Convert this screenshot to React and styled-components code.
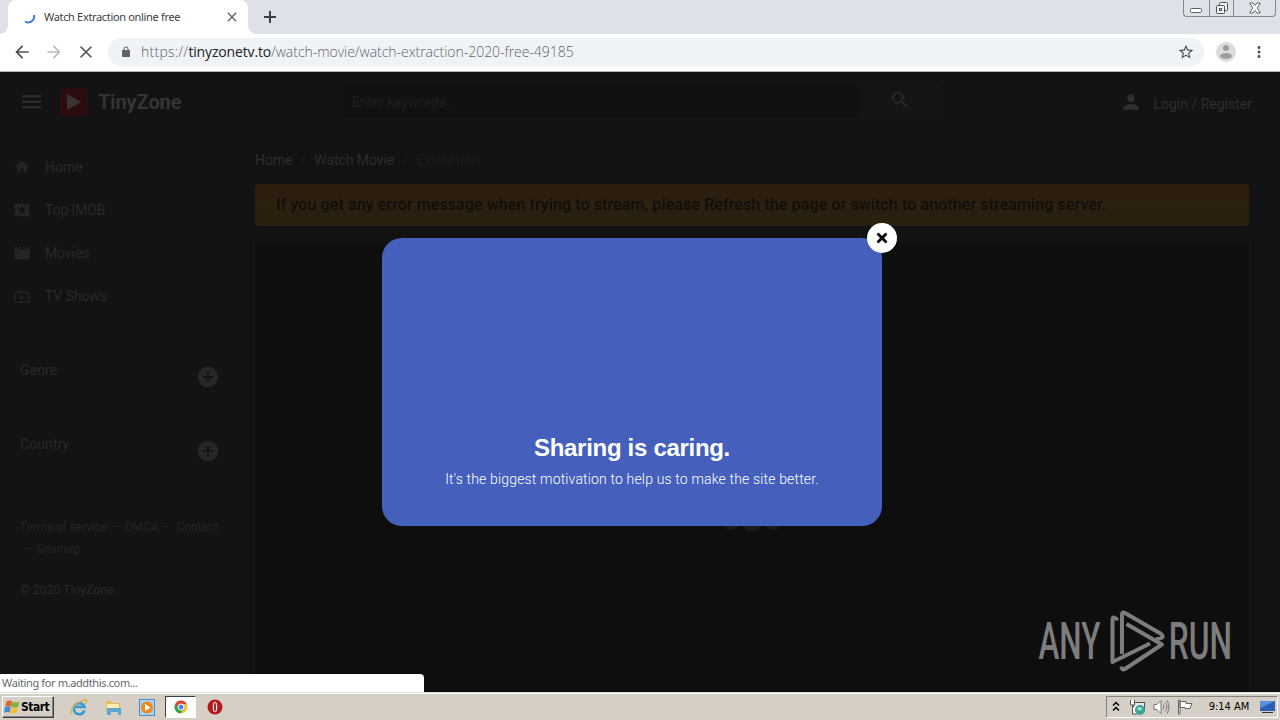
import React from "react";
import styled, { createGlobalStyle } from "styled-components";

const Global = createGlobalStyle`
  * { box-sizing: border-box; }
  body { margin: 0; background: #121212; overflow: hidden; }
  svg { display: block; flex: none; }
`;

const ui = `"DejaVu Sans Condensed", "DejaVu Sans", sans-serif`;

const Screen = styled.div`
  width: 1280px;
  height: 720px;
  display: flex;
  flex-direction: column;
  overflow: hidden;
  font-family: Roboto, sans-serif;
`;

/* ---------- browser chrome ---------- */
const TabStrip = styled.div`
  height: 34px;
  background: #dee1e7;
  display: flex;
  align-items: flex-start;
  padding-left: 8px;
`;
const Tab = styled.div`
  width: 240px;
  height: 34px;
  background: #fff;
  border-radius: 8px 8px 0 0;
  display: flex;
  align-items: center;
  padding: 0 11px 0 15px;
  position: relative;
  &::before, &::after {
    content: "";
    position: absolute;
    bottom: 0;
    width: 8px;
    height: 8px;
  }
  &::before { left: -8px; background: radial-gradient(circle at 0 0, #dee1e7 7.5px, #fff 8px); }
  &::after { right: -8px; background: radial-gradient(circle at 100% 0, #dee1e7 7.5px, #fff 8px); }
`;
const TabTitle = styled.div`
  flex: 1;
  margin-left: 8px;
  white-space: nowrap;
  font: 11px/14px "Noto Sans", sans-serif;
  letter-spacing: -0.33px;
  color: #3c4043;
`;
const NewTab = styled.div`
  margin: 10px 0 0 15px;
`;
const WindowButtons = styled.div`
  margin-left: auto;
  margin-right: 4px;
  width: 93px;
  height: 17px;
  display: flex;
  border: 1px solid #83878e;
  border-top: 0;
  border-radius: 0 0 4px 4px;
`;
const WindowButton = styled.div`
  width: ${(p) => p.$w}px;
  display: flex;
  justify-content: center;
  align-items: center;
  & + & { border-left: 1px solid #83878e; }
`;
const Toolbar = styled.div`
  height: 38px;
  background: #fff;
  border-bottom: 1px solid #b4b4b4;
  display: flex;
  align-items: center;
  padding: 0 12px 1px 14px;
`;
const NavIcons = styled.div`
  display: flex;
  flex: none;
  gap: 16px;
  width: 94px;
`;
const Omnibox = styled.div`
  flex: none;
  width: 1096px;
  height: 28px;
  border-radius: 14px;
  background: #f0f3f6;
  display: flex;
  align-items: center;
  padding: 0 10px 0 12px;
`;
const Url = styled.div`
  flex: 1;
  margin-left: 9px;
  font: 300 14px/18px "Open Sans", sans-serif;
  letter-spacing: -0.04px;
  color: #5f6368;
  white-space: nowrap;
  b { font-weight: 400; color: #202124; letter-spacing: -0.15px; }
`;
const Scheme = styled.span`
  letter-spacing: 0.25px;
`;
const ToolbarEnd = styled.div`
  display: flex;
  align-items: center;
  margin-left: 12px;
  gap: 14px;
`;

/* ---------- site ---------- */
const Site = styled.div`
  flex: 1;
  position: relative;
  display: flex;
  flex-direction: column;
  background: #121212;
  min-height: 0;
`;
const Header = styled.header`
  height: 64px;
  flex: none;
  background: #131313;
  border-bottom: 1px solid #121212;
  display: flex;
  align-items: center;
  padding: 0 28px 4px 20px;
`;
const Brand = styled.div`
  display: flex;
  align-items: center;
  width: 321px;
  font-size: 20px;
  font-weight: 700;
  letter-spacing: -0.1px;
  color: #343434;
`;
const LogoMark = styled.div`
  width: 28px;
  height: 28px;
  margin: 0 10px 0 16px;
  border-radius: 4px;
  background: #2b0d0e;
  display: flex;
  align-items: center;
  justify-content: center;
`;
const Search = styled.div`
  display: flex;
  width: 600px;
  height: 36px;
`;
const SearchInput = styled.div`
  flex: 1;
  background: #111;
  border: 1px solid #141414;
  padding-left: 10px;
  font-size: 14px;
  line-height: 34px;
  letter-spacing: -0.1px;
  color: #1f1f1f;
`;
const SearchButton = styled.div`
  width: 80px;
  background: #151515;
  border-radius: 0 3px 3px 0;
  display: flex;
  justify-content: center;
  padding: 5px 2px 0 0;
`;
const Login = styled.div`
  margin-left: auto;
  display: flex;
  align-items: center;
  gap: 11px;
  font-size: 14px;
  color: #2d2d2d;
  span { padding-top: 4px; }
`;
const Body = styled.div`
  flex: 1;
  display: flex;
  min-height: 0;
`;
const Sidebar = styled.aside`
  width: 240px;
  flex: none;
  background: #131313;
  border-right: 1px solid #111;
  padding-top: 9px;
`;
const NavItem = styled.div`
  height: 43px;
  display: flex;
  align-items: center;
  gap: 15px;
  padding-left: 14px;
  font-size: 14px;
  letter-spacing: -0.1px;
  color: #292929;
`;
const Group = styled.div`
  height: 74px;
  display: flex;
  justify-content: space-between;
  padding: 0 21px 0 20px;
  font-size: 14px;
  line-height: 20px;
  letter-spacing: 0.1px;
  color: #292929;
  svg { margin-top: 7px; }
`;
const Groups = styled.div`
  margin-top: 43px;
`;
const FootLinks = styled.div`
  margin-top: 8px;
  padding: 0 21px 0 20px;
  font-size: 12px;
  line-height: 22px;
  letter-spacing: -0.1px;
  color: #242424;
`;
const FootRow = styled.div`
  display: flex;
  white-space: pre;
  justify-content: ${(p) => (p.$spread ? "space-between" : "flex-start")};
`;
const Copyright = styled.div`
  margin-top: 19px;
  padding-left: 20px;
  font-size: 12.3px;
  line-height: 22px;
  color: #292929;
`;
const Main = styled.main`
  flex: 1;
  display: flex;
  flex-direction: column;
  padding: 14px 31px 0 15px;
`;
const Crumbs = styled.div`
  display: flex;
  font-size: 14px;
  line-height: 20px;
  letter-spacing: -0.08px;
  color: #2c2c2c;
`;
const Slash = styled.span`
  width: 22px;
  text-align: center;
  color: #1d1d1d;
`;
const Current = styled.span`
  color: #1c1c1c;
  letter-spacing: 0.1px;
`;
const Alert = styled.div`
  height: 42px;
  margin-top: 14px;
  border-radius: 3px;
  background: linear-gradient(#2d1f0f 40%, #2a2010 60%);
  padding-left: 21px;
  font-size: 16px;
  font-weight: 500;
  line-height: 41px;
  letter-spacing: 0.105px;
  color: #120e09;
`;
const Player = styled.div`
  flex: 1;
  margin-top: 16px;
  background: #0e0e0e;
  display: flex;
  justify-content: center;
  gap: 5px;
  padding-top: 272px;
`;
const Dot = styled.i`
  width: ${(p) => p.$s}px;
  height: ${(p) => p.$s}px;
  margin-top: ${(p) => (18 - p.$s) / 2}px;
  border-radius: 50%;
  background: #1b1b1b;
`;

/* ---------- things above the page ---------- */
const Modal = styled.div`
  position: absolute;
  left: 382px;
  top: 166px;
  width: 500px;
  height: 288px;
  border-radius: 20px;
  background: #4460bc;
  color: #fff;
  text-align: center;
  padding-top: 195px;
`;
const ModalTitle = styled.h2`
  margin: 0;
  font: bold 24px/30px "Liberation Sans", sans-serif;
  letter-spacing: -0.3px;
`;
const ModalText = styled.p`
  margin: 7px 0 0;
  font-size: 14px;
  font-weight: 300;
  line-height: 18px;
  letter-spacing: 0.16px;
`;
const ModalClose = styled.div`
  position: absolute;
  right: -15px;
  top: -15px;
  width: 30px;
  height: 30px;
  border-radius: 50%;
  background: #fff;
  display: flex;
  align-items: center;
  justify-content: center;
`;
const Watermark = styled.svg`
  position: absolute;
  left: 1030px;
  top: 530px;
  overflow: visible;
`;
const Status = styled.div`
  position: absolute;
  left: 0;
  bottom: 0;
  width: 424px;
  height: 18px;
  border-radius: 0 4px 0 0;
  background: #fff;
  padding-left: 2px;
  font: 11px/18px "Noto Sans", sans-serif;
  letter-spacing: -0.37px;
  color: #68696b;
`;

/* ---------- taskbar ---------- */
const Taskbar = styled.div`
  height: 28px;
  background: #d5cfc6;
  border-top: 1px solid #e0dcd5;
  box-shadow: inset 0 1px #fff;
  display: flex;
  align-items: center;
  padding: 1px 2px 0 2px;
`;
const StartButton = styled.div`
  width: 52px;
  height: 22px;
  border: 1px solid;
  border-color: #fff #404040 #404040 #fff;
  box-shadow: inset -1px -1px #87837c;
  display: flex;
  align-items: center;
  padding-left: 1px;
  gap: 1px;
  font: bold 12px/18px ${ui};
  letter-spacing: -0.5px;
  color: #000;
`;
const TaskIcon = styled.div`
  width: ${(p) => (p.$active ? 31 : 34)}px;
  height: 22px;
  display: flex;
  justify-content: center;
  align-items: center;
  background: ${(p) => (p.$active ? "#fff" : "none")};
  border: ${(p) => (p.$active ? "1px solid" : "0")};
  border-color: #404040 #fff #fff #404040;
  margin: ${(p) => (p.$active ? "0 2px 0 1px" : "0")};
`;
const Launchers = styled.div`
  display: flex;
  margin-left: 8px;
`;
const Tray = styled.div`
  margin-left: auto;
  width: 172px;
  height: 22px;
  border: 1px solid;
  border-color: #87837c #fff #fff #87837c;
  display: flex;
  align-items: center;
  padding-left: 5px;
`;
const TrayIcons = styled.div`
  display: flex;
  align-items: center;
  gap: 7px;
  margin-left: 9px;
`;
const DesktopIcon = styled.svg`
  margin: 0 2px 0 auto;
`;
const Clock = styled.div`
  width: 42px;
  text-align: center;
  white-space: nowrap;
  margin-left: 14px;
  font: 11px/16px ${ui};
  letter-spacing: -0.05px;
  color: #000;
`;

const ScaledSvg = styled.svg`
  transform: scale(${(p) => p.$k});
`;
const Icon = ({ d, size = 20, color = "#262626", scale = 1 }) => (
  <ScaledSvg $k={scale} width={size} height={size} viewBox="0 0 24 24" fill={color}>
    <path d={d} />
  </ScaledSvg>
);

const paths = {
  back: "M20 11H7.83l5.59-5.59L12 4l-8 8 8 8 1.41-1.41L7.83 13H20v-2z",
  forward: "M12 4l-1.41 1.41L16.17 11H4v2h12.17l-5.58 5.59L12 20l8-8z",
  close: "M19 6.41L17.59 5 12 10.59 6.41 5 5 6.41 10.59 12 5 17.59 6.41 19 12 13.41 17.59 19 19 17.59 13.41 12z",
  lock: "M18 8h-1V6c0-2.76-2.24-5-5-5S7 3.24 7 6v2H6c-1.1 0-2 .9-2 2v10c0 1.100.9 2 2 2h12c1.100 0 2-.9 2-2V10c0-1.100-.9-2-2-2zM9 6c0-1.660 1.340-3 3-3s3 1.340 3 3v2H9z",
  star: "M22 9.240l-7.190-.620L12 2 9.190 8.630 2 9.240l5.460 4.730L5.820 21 12 17.270 18.180 21l-1.630-7.030zM12 15.400l-3.760 2.270 1-4.280-3.320-2.880 4.380-.380L12 6.100l1.710 4.040 4.380.380-3.320 2.880 1 4.280z",
  dots: "M12 8c1.100 0 2-.9 2-2s-.9-2-2-2-2 .9-2 2 .9 2 2 2zm0 2c-1.100 0-2 .9-2 2s.9 2 2 2 2-.9 2-2-.9-2-2-2zm0 6c-1.100 0-2 .9-2 2s.9 2 2 2 2-.9 2-2-.9-2-2-2z",
  menu: "M1 4.500h21v2.500H1zm0 6h21v2.500H1zm0 6h21v2.500H1z",
  search: "M15.500 14h-.790l-.280-.270A6.470 6.470 0 0 0 16 9.500 6.500 6.500 0 1 0 9.500 16c1.610 0 3.090-.590 4.230-1.570l.270.280v.790l5 4.990L20.490 19zM9.500 14a4.500 4.500 0 1 1 0-9 4.500 4.500 0 0 1 0 9z",
  person: "M12 12c2.210 0 4-1.790 4-4s-1.790-4-4-4-4 1.790-4 4 1.790 4 4 4zm0 2c-2.670 0-8 1.340-8 4v2h16v-2c0-2.660-5.330-4-8-4z",
  home: "M10 20v-6h4v6h5v-8h3L12 3 2 12h3v8z",
  ticket: "M20 12c0-1.100.9-2 2-2V6c0-1.100-.9-2-2-2H4c-1.100 0-2 .9-2 2v4c1.100 0 2 .9 2 2s-.9 2-2 2v4c0 1.100.9 2 2 2h16c1.100 0 2-.9 2-2v-4c-1.100 0-2-.9-2-2zm-4.420 4.800L12 14.500l-3.580 2.300 1.080-4.120-3.290-2.690 4.240-.250L12 5.800l1.540 3.950 4.240.250-3.290 2.690z",
  movie: "M18 4l2 4h-3l-2-4h-2l2 4h-3l-2-4H8l2 4H7L5 4H4c-1.100 0-2 .9-2 2v12c0 1.100.9 2 2 2h16c1.100 0 2-.9 2-2V4z",
  tv: "M21 6h-7.590l3.290-3.290L16 2l-4 4-4-4-.7.710L10.590 6H3c-1.100 0-2 .9-2 2v12c0 1.100.9 2 2 2h18c1.100 0 2-.9 2-2V8c0-1.100-.9-2-2-2zm0 14H3V8h18zM9 10v8l7-4z",
  plus: "M12 2C6.480 2 2 6.480 2 12s4.480 10 10 10 10-4.480 10-10S17.520 2 12 2zm5 11h-4v4h-2v-4H7v-2h4V7h2v4h4z",
};

const NAV = [
  ["Home", "home", 1.05],
  ["Top IMDB", "ticket", 1.15],
  ["Movies", "movie", 1.15],
  ["TV Shows", "tv", 1.05],
];

const Browser = () => (
  <>
    <TabStrip>
      <Tab>
        <svg width="13" height="14" viewBox="0 0 13 14" fill="none" stroke="#3b78e0" strokeWidth="2">
          <path d="M11 5a6 6 0 0 1-9 6.500" />
        </svg>
        <TabTitle>Watch Extraction online free</TabTitle>
        <Icon d={paths.close} size={10} scale={1.6} color="#5f6368" />
      </Tab>
      <NewTab>
        <svg width="14" height="14" viewBox="0 0 14 14" stroke="#3c4043" strokeWidth="2">
          <path d="M7 1v12M1 7h12" />
        </svg>
      </NewTab>
      <WindowButtons>
        <WindowButton $w={25}>
          <svg width="14" height="16" fill="#fff" stroke="#5d6168"><rect x="1.500" y="8.500" width="11" height="4" rx="1" /></svg>
        </WindowButton>
        <WindowButton $w={25}>
          <svg width="14" height="16" fill="#f4f5f7" stroke="#4d5158">
            <rect x="4.500" y="2.500" width="8" height="8" rx="1" />
            <rect x="1.500" y="5.500" width="8" height="8" rx="1" />
            <rect x="4.500" y="8.500" width="2" height="2" />
          </svg>
        </WindowButton>
        <WindowButton $w={42}>
          <svg width="12" height="16" viewBox="0 0 12 16" fill="#fff" stroke="#5d6168" strokeWidth="1">
            <path d="M1 3h3l2 2.500L8 3h3v1L8.200 8 11 12v1H8l-2-2.500L4 13H1v-1l2.800-4L1 4z" />
          </svg>
        </WindowButton>
      </WindowButtons>
    </TabStrip>
    <Toolbar>
      <NavIcons>
        <Icon d={paths.back} size={16} scale={1.25} color="#4d5156" />
        <Icon d={paths.forward} size={16} scale={1.25} color="#b9bbbe" />
        <Icon d={paths.close} size={16} scale={1.3} color="#5f6368" />
      </NavIcons>
      <Omnibox>
        <Icon d={paths.lock} size={12} color="#5f6368" />
        <Url><Scheme>https://</Scheme><b>tinyzonetv.to</b>/watch-movie/watch-extraction-2020-free-49185</Url>
        <Icon d={paths.star} size={16} scale={1.1} color="#4d5156" />
      </Omnibox>
      <ToolbarEnd>
        <svg width="20" height="20" viewBox="0 0 20 20">
          <circle cx="10" cy="10" r="10" fill="#dcdcdc" />
          <circle cx="10" cy="6" r="3" fill="#9d9d9d" />
          <ellipse cx="10" cy="14" rx="6" ry="3" fill="#9d9d9d" />
        </svg>
        <Icon d={paths.dots} size={18} color="#4d5156" />
      </ToolbarEnd>
    </Toolbar>
  </>
);

const Logo = () => (
  <Watermark width="250" height="76" viewBox="1030 602 250 76">
    <g fill="#7d7d7d" fontFamily="Roboto, sans-serif" fontSize="52" fontWeight="500">
      <text transform="translate(1038.500 659) scale(.605 1)">ANY</text>
      <text transform="translate(1168.800 659) scale(.61 1)">RUN</text>
    </g>
    <g fill="none" stroke="#7d7d7d" strokeWidth="4" strokeLinecap="butt" strokeLinejoin="round">
      <path d="M1122 654V614.500q0-3 3-1.500L1160.500 633.500q4 3 .5 4.500t-3.500-1" />
      <path d="M1126.500 624L1162 644.500L1125 669q-3.500 1.500-3.500-2.500" />
      <path d="M1116.500 620.500V619q-4-3.500-4 1V662L1150 643.500" />
    </g>
  </Watermark>
);

export default function App() {
  return (
    <Screen>
      <Global />
      <Browser />
      <Site>
        <Header>
          <Brand>
            <Icon d={paths.menu} size={24} scale={0.9} color="#2d2d2d" />
            <LogoMark>
              <svg width="14" height="16" viewBox="0 0 14 16" fill="#383434"><path d="M0 0l14 8L0 16z" /></svg>
            </LogoMark>
            TinyZone
          </Brand>
          <Search>
            <SearchInput>Enter keywords...</SearchInput>
            <SearchButton><Icon d={paths.search} size={22} color="#2a2a2a" /></SearchButton>
          </Search>
          <Login>
            <Icon d={paths.person} size={22} color="#2f2f2f" scale={1.05} />
            <span>Login / Register</span>
          </Login>
        </Header>
        <Body>
          <Sidebar>
            {NAV.map(([label, icon, scale]) => (
              <NavItem key={label}>
                <Icon d={paths[icon]} size={16} scale={scale} color="#242424" />
                <span>{label}</span>
              </NavItem>
            ))}
            <Groups>
              {["Genre", "Country"].map((label) => (
                <Group key={label}>
                  {label}
                  <Icon d={paths.plus} size={20} scale={1.23} />
                </Group>
              ))}
            </Groups>
            <FootLinks>
              <FootRow $spread>
                <span>Terms of service</span><span>–</span><span>DMCA –</span><span> Contact</span>
              </FootRow>
              <FootRow>{" –  Sitemap"}</FootRow>
            </FootLinks>
            <Copyright>© 2020 TinyZone</Copyright>
          </Sidebar>
          <Main>
            <Crumbs>
              Home<Slash>/</Slash>Watch Movie<Slash>/</Slash><Current>Extraction</Current>
            </Crumbs>
            <Alert>
              If you get any error message when trying to stream, please Refresh the page or switch to another streaming server.
            </Alert>
            <Player>
              <Dot $s={14} /><Dot $s={18} /><Dot $s={14} />
            </Player>
          </Main>
        </Body>
        <Modal>
          <ModalTitle>Sharing is caring.</ModalTitle>
          <ModalText>It's the biggest motivation to help us to make the site better.</ModalText>
          <ModalClose>
            <svg width="12" height="12" viewBox="0 0 12 12" stroke="#000" strokeWidth="2.800"><path d="M1.500 1.500l9 9M10.500 1.500l-9 9" /></svg>
          </ModalClose>
        </Modal>
        <Logo />
        <Status>Waiting for m.addthis.com...</Status>
      </Site>
      <Taskbar>
        <StartButton>
          <svg width="16" height="16" viewBox="0 0 16 16">
            <path d="M2.500 2.500Q5 .8 8 2.200L6.800 7.500Q4 6.300 1.200 7.800z" fill="#e3602a" />
            <path d="M8.200 2.500Q12 4.200 15.500 2.500L14 8Q11 9.200 7 7.800z" fill="#7db63c" />
            <path d="M1 8.200Q4 6.800 6.700 8L5.500 13.600Q3 12.400 0 13.800z" fill="#3f8ad8" />
            <path d="M7 8.300Q10.500 9.800 13.800 8.600L12.400 14Q9 15.500 5.800 14z" fill="#f3bf35" />
          </svg>
          Start
        </StartButton>
        <Launchers>
          <TaskIcon>
            <svg width="18" height="18" viewBox="0 0 18 18" fill="none">
              <path d="M14.500 12.500A5.500 5.500 0 1 1 14.500 9H5" stroke="#2c9bd8" strokeWidth="2.600" />
              <path d="M2 16C-1 12 8 2 16 2q2 1-1 4" stroke="#e0b13e" strokeWidth="1.300" />
            </svg>
          </TaskIcon>
          <TaskIcon>
            <svg width="17" height="17" viewBox="0 0 17 17">
              <path d="M1 2h5l1 2h8v9H1z" fill="#e6bd52" />
              <path d="M2 5h12v5H2z" fill="#fbeeb0" />
              <path d="M2 9h14v7h-3v-3H6v3H2z" fill="#5aa7d8" />
            </svg>
          </TaskIcon>
          <TaskIcon>
            <svg width="17" height="17" viewBox="0 0 17 17">
              <rect x=".5" y=".5" width="15" height="16" fill="#a9d3f0" stroke="#4e8fc2" />
              <circle cx="8" cy="8.500" r="6" fill="#ee8a1d" />
              <path d="M6 5l5.500 3.500L6 12z" fill="#fff" />
            </svg>
          </TaskIcon>
          <TaskIcon $active>
            <svg width="14" height="14" viewBox="0 0 14 14">
              <circle cx="7" cy="7" r="6.500" fill="#f2c32f" />
              <path d="M1.400 3.700A6.500 6.500 0 0 1 12.700 4H7L4 8.500z" fill="#db4437" />
              <path d="M1.400 3.700A6.500 6.500 0 0 0 6.500 13.500L9.500 8.500H4.300z" fill="#2f9e57" />
              <circle cx="7" cy="7" r="3" fill="#4a83e8" stroke="#fff" />
            </svg>
          </TaskIcon>
          <TaskIcon>
            <svg width="16" height="16" viewBox="0 0 16 16">
              <ellipse cx="8" cy="8" rx="7.500" ry="7.500" fill="#b5161b" />
              <ellipse cx="8" cy="8" rx="2.300" ry="5.300" fill="#f4dcdc" />
              <ellipse cx="8" cy="8" rx="1" ry="4.500" fill="#8a3030" />
            </svg>
          </TaskIcon>
        </Launchers>
        <Tray>
          <svg width="8" height="12" viewBox="0 0 8 12" fill="none" stroke="#000" strokeWidth="1.500"><path d="M1 4.500l3-3 3 3M1 9.500l3-3 3 3" /></svg>
          <TrayIcons>
            <svg width="17" height="17" viewBox="0 0 17 17">
              <rect x="4.500" y="3.500" width="11" height="9" fill="#e8e8e8" stroke="#555" />
              <path d="M1.500 1v5h4V1M3.500 6v9H8" fill="#fff" stroke="#555" />
              <circle cx="11" cy="11" r="5" fill="#3aa79a" />
              <path d="M8 10q3-4 5 0-2 3-5 0" fill="#a8e0d4" />
            </svg>
            <svg width="17" height="16" viewBox="0 0 17 16" fill="#fff" stroke="#777">
              <path d="M1 5.500h3l4-4v13l-4-4H1z" />
              <path d="M10 5.500q2 2.500 0 5M12 3.500q4 4.500 0 9M14 1.500q4 6.500 0 13" fill="none" />
            </svg>
            <svg width="17" height="16" viewBox="0 0 17 16" fill="#fff" stroke="#666">
              <path d="M1.500 1v14h1.500V1zM3 2.500h6v2h6l-2 5H8v-1H3z" />
            </svg>
          </TrayIcons>
          <Clock>9:14 AM</Clock>
          <DesktopIcon width="15" height="14" viewBox="0 0 15 14">
            <rect y="1" width="15" height="10" fill="#2c5fb8" />
            <path d="M0 1h15L0 8z" fill="#5c91dc" />
            <path d="M2 12h11v1H2z" fill="#333" />
          </DesktopIcon>
        </Tray>
      </Taskbar>
    </Screen>
  );
}
